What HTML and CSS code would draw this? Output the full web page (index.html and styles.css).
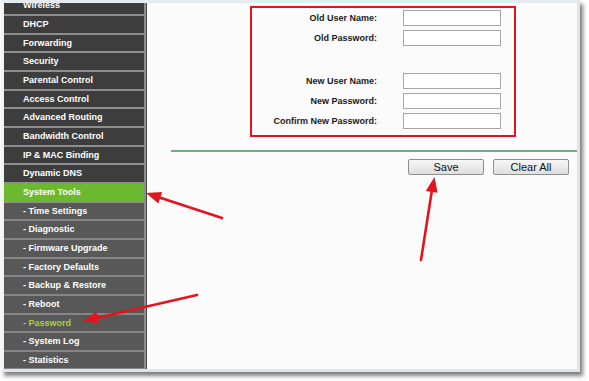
FILE: index.html
```html
<!DOCTYPE html>
<html>
<head>
<meta charset="utf-8">
<link rel="stylesheet" href="styles.css">
</head>
<body>
<div class="frame">
  <div class="shot">
    <nav class="sidebar">
      <ul class="menu">
        <li class="item">Wireless</li>
        <li class="item">DHCP</li>
        <li class="item">Forwarding</li>
        <li class="item">Security</li>
        <li class="item">Parental Control</li>
        <li class="item">Access Control</li>
        <li class="item">Advanced Routing</li>
        <li class="item">Bandwidth Control</li>
        <li class="item">IP &amp; MAC Binding</li>
        <li class="item">Dynamic DNS</li>
        <li class="item active">System Tools</li>
        <li class="item sub">- Time Settings</li>
        <li class="item sub">- Diagnostic</li>
        <li class="item sub">- Firmware Upgrade</li>
        <li class="item sub">- Factory Defaults</li>
        <li class="item sub">- Backup &amp; Restore</li>
        <li class="item sub">- Reboot</li>
        <li class="item sub current">- Password</li>
        <li class="item sub">- System Log</li>
        <li class="item sub">- Statistics</li>
      </ul>
    </nav>
    <main class="content">
      <div class="formbox">
        <label class="label">Old User Name:</label><input class="field" type="text">
        <label class="label">Old Password:</label><input class="field" type="password">
        <div class="spacer"></div>
        <label class="label">New User Name:</label><input class="field" type="text">
        <label class="label">New Password:</label><input class="field" type="password">
        <label class="label">Confirm New Password:</label><input class="field" type="password">
      </div>
      <div class="rule"></div>
      <div class="buttons">
        <button class="btn">Save</button>
        <button class="btn">Clear All</button>
      </div>
    </main>
  </div>
</div>
<svg class="annotations" width="589" height="381" viewBox="0 0 589 381">
  <g stroke="#e3141e" stroke-width="2.6" stroke-linecap="round" fill="none">
    <line x1="222" y1="218" x2="160.3" y2="197.7"/>
    <line x1="197" y1="295" x2="97.6" y2="317.7"/>
    <line x1="421" y1="260" x2="431.7" y2="191.8"/>
  </g>
  <g fill="#e3141e">
    <polygon points="146,193 162.1,192 158.4,203.4"/>
    <polygon points="83,321 98.9,323.5 96.3,311.8"/>
    <polygon points="434.5,177 437.6,192.7 425.8,190.9"/>
  </g>
</svg>
</body>
</html>
```

FILE: styles.css
```css
html, body {
  margin: 0;
  padding: 0;
  background: #ffffff;
}

body {
  position: relative;
  width: 589px;
  height: 381px;
  overflow: hidden;
  font-family: "Liberation Sans", Arial, sans-serif;
}

.frame {
  margin-left: 1px;
  width: 573px;
  height: 366px;
  border-style: solid;
  border-width: 3px 3px 3px 3px;
  border-color: #e6ebf1 #dfe5ec #dfe4ea #f2f4f6;
  box-shadow: 3px 4px 4px rgba(0, 0, 0, 0.5);
}

.shot {
  display: flex;
  height: 366px;
  overflow: hidden;
  background: #fbfbfb;
}

.sidebar {
  width: 142px;
  flex: none;
  border-right: 1px solid #4a4a4a;
  overflow: hidden;
}

.menu {
  list-style: none;
  margin: -5.67px 0 0 0;
  padding: 0;
  border-right: 2px solid #8d8d8d;
}

.item {
  box-sizing: border-box;
  height: 18.667px;
  border-bottom: 2px solid #8f8f8f;
  background: #3d3d3d;
  color: #ffffff;
  font-weight: bold;
  font-size: 9px;
  line-height: 16.667px;
  padding-left: 19px;
  white-space: nowrap;
}

.item.sub {
  background: #585858;
  border-bottom-color: #858585;
}

.item.active {
  background: #6cb92f;
}

.item.current {
  color: #a8d33a;
}

.content {
  flex: 1;
  display: flex;
  flex-direction: column;
}

.formbox {
  margin: 3px 0 0 103px;
  width: 262px;
  box-sizing: border-box;
  width: 266px;
  border: 2px solid #e3141e;
  padding: 2px 13px 6px 0;
  display: grid;
  grid-template-columns: 125px 98px;
  column-gap: 26px;
  row-gap: 4.4px;
  align-items: center;
}

.label {
  text-align: right;
  font-weight: bold;
  font-size: 9px;
  color: #1a1a1a;
  white-space: nowrap;
}

.field {
  box-sizing: border-box;
  width: 98px;
  height: 16px;
  margin: 0;
  padding: 0;
  border: 1px solid #a7a7a7;
  background: #ffffff;
}

.spacer {
  grid-column: 1 / 3;
  height: 17.4px;
}

.rule {
  margin: 13px 0 0 24px;
  height: 1.3px;
  background: #72ab87;
}

.buttons {
  display: flex;
  justify-content: flex-end;
  gap: 9px;
  margin: 7px 8px 0 0;
}

.btn {
  box-sizing: border-box;
  width: 76px;
  height: 16px;
  margin: 0;
  padding: 0;
  border: 1px solid #8e8e8e;
  border-radius: 2px;
  background: linear-gradient(#f7f7f7, #dedede);
  font-family: "Liberation Sans", Arial, sans-serif;
  font-size: 11px;
  line-height: 14px;
  color: #111111;
}

.annotations {
  position: absolute;
  left: 0;
  top: 0;
  pointer-events: none;
}
```
